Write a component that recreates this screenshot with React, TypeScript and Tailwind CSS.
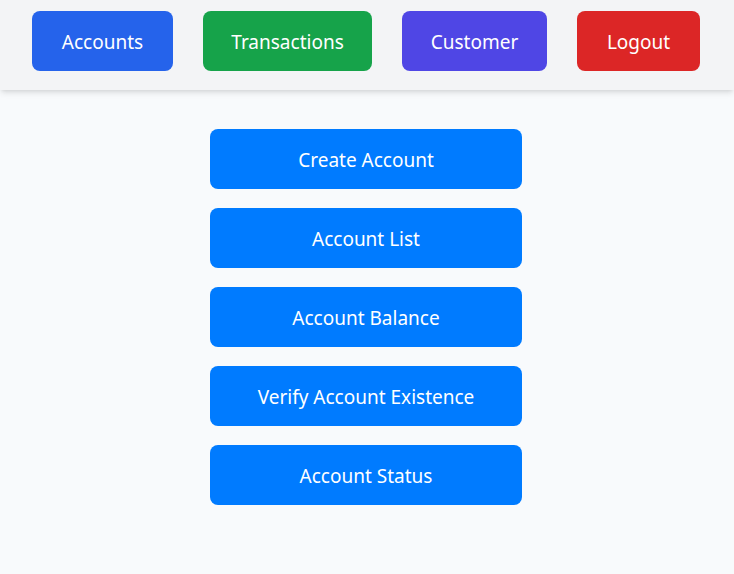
const navItems = [
  { label: "Accounts", className: "w-[141px] bg-[#2563eb]" },
  { label: "Transactions", className: "w-[169px] bg-[#16a34a]" },
  { label: "Customer", className: "w-[145px] bg-[#4f46e5]" },
  { label: "Logout", className: "w-[123px] bg-[#dc2626]" },
];

const accountActions = [
  "Create Account",
  "Account List",
  "Account Balance",
  "Verify Account Existence",
  "Account Status",
];

const App = () => {
  return (
    <div
      className="min-h-[574px] bg-[#f8fafc]"
      style={{ fontFamily: '"Noto Sans", "Open Sans", sans-serif' }}
    >
      {/* Top navigation */}
      <nav className="h-[90px] bg-[#f3f4f6] shadow-md flex items-start gap-[30px] px-8 pt-[11px]">
        {navItems.map((item) => (
          <button
            key={item.label}
            className={`${item.className} h-[60px] pt-[2px] rounded-lg text-white text-[19px]`}
          >
            {item.label}
          </button>
        ))}
      </nav>

      {/* Account actions */}
      <div className="pt-[39px] pr-[2px] flex flex-col items-center gap-[19.5px]">
        {accountActions.map((action) => (
          <button
            key={action}
            className="w-[312px] h-[59.5px] pt-[2px] rounded-lg bg-[#007bff] text-white text-[19px]"
          >
            {action}
          </button>
        ))}
      </div>
    </div>
  );
};

export default App;
